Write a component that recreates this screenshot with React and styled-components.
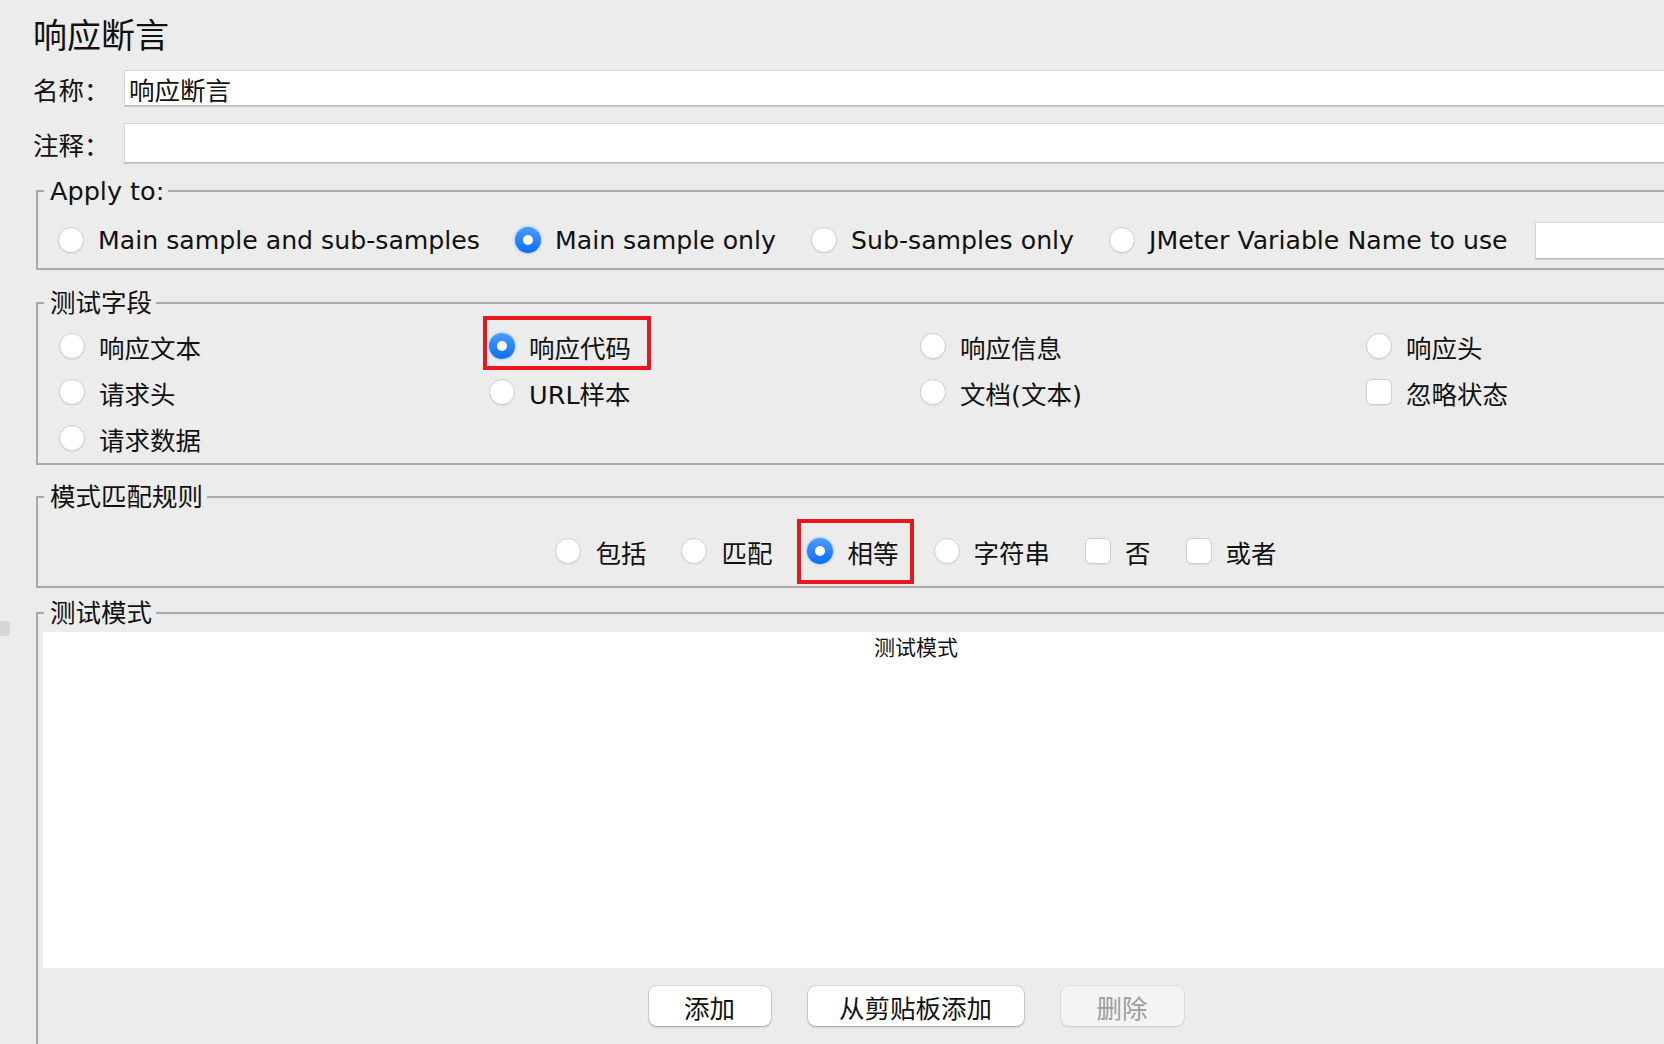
import React from 'react'
import styled, { createGlobalStyle, css } from 'styled-components'

const GlobalStyle = createGlobalStyle`
  html, body {
    margin: 0;
    padding: 0;
    background: #ececec;
    overflow: hidden;
  }
  body {
    font-family: "DejaVu Sans", "Noto Sans CJK SC", sans-serif;
    color: #111;
  }
`

const Page = styled.div`
  position: relative;
  width: 1800px;
  height: 1044px;
  padding: 14px 0 0 33px;
  box-sizing: border-box;
`

const Knob = styled.div`
  position: absolute;
  left: 0;
  top: 621px;
  width: 10px;
  height: 15px;
  border-radius: 0 4px 4px 0;
  background: #d6d6d6;
`

const Title = styled.h1`
  margin: 0;
  font-family: "Noto Sans CJK SC", sans-serif;
  font-size: 34px;
  font-weight: 400;
  line-height: 40px;
`

const FieldRow = styled.div`
  display: flex;
  align-items: center;
  margin-top: ${p => p.$mt}px;
  height: ${p => p.$h}px;
`

const Label = styled.span`
  width: 91px;
  flex: none;
  font-size: 25.5px;
`

const TextBox = styled.input`
  flex: 1;
  align-self: ${p => (p.$h ? 'center' : 'stretch')};
  height: ${p => (p.$h ? `${p.$h}px` : 'auto')};
  box-sizing: border-box;
  min-width: 0;
  margin: ${p => p.$margin || 0};
  padding: 0 4px;
  border: 1px solid #d6d6d6;
  border-bottom-color: #b9b9b9;
  box-shadow: 0 1px 1px rgba(0, 0, 0, 0.12);
  background: #fff;
  font: inherit;
  font-size: 25.5px;
  color: #111;
  outline: none;
`

const Group = styled.fieldset`
  margin: ${p => p.$mt}px 0 0 3px;
  width: 1760px;
  box-sizing: border-box;
  padding: 0 0 ${p => p.$pb || 0}px;
  min-width: 0;
  border: 2px solid #a9a9a9;
  font-size: 25.5px;
`

const Legend = styled.legend`
  margin-left: 6px;
  padding: 0 4px 0 6px;
  font-size: 25.5px;
  line-height: 28px;
`

const Line = styled.div`
  display: flex;
  align-items: center;
  justify-content: ${p => (p.$center ? 'center' : 'flex-start')};
  gap: 35px;
  height: 30px;
  padding: ${p => p.$pad};
  font-size: ${p => p.$fs || 25.5}px;
`

const Grid = styled.div`
  display: grid;
  grid-template-columns: 430px 431px 446px 1fr;
  grid-auto-rows: 30px;
  row-gap: 16px;
  padding: 14px 0 10px 21px;
`

const Option = styled.label`
  position: relative;
  display: inline-flex;
  align-items: center;
  gap: 14px;
  height: 30px;
  font-size: inherit;
  white-space: nowrap;
`

const Mark = styled.span`
  position: absolute;
  left: ${p => p.$l}px;
  top: ${p => p.$t}px;
  width: ${p => p.$w}px;
  height: ${p => p.$h}px;
  box-sizing: border-box;
  border: 4px solid #e8171c;
  pointer-events: none;
`

const Dot = styled.span`
  position: relative;
  flex: none;
  width: 26px;
  height: 26px;
  box-sizing: border-box;
  border-radius: ${p => (p.$square ? '6px' : '50%')};
  background: #fff;
  border: 1px solid #cfcfcf;
  box-shadow: 0 1px 1px rgba(0, 0, 0, 0.07);
  ${p =>
    p.$on &&
    css`
      border: none;
      background: linear-gradient(#4b9dfb, #0a6ef1);
      box-shadow: 0 0 3px rgba(20, 120, 245, 0.55);
      &::after {
        content: '';
        position: absolute;
        left: 50%;
        top: 50%;
        width: 10px;
        height: 10px;
        margin: -5px 0 0 -5px;
        border-radius: 50%;
        background: #fff;
      }
    `}
`

const Table = styled.div`
  height: 336px;
  margin: 5px 5px 0 5px;
  background: #fff;
`

const TableHead = styled.div`
  text-align: center;
  font-family: "Noto Sans CJK SC", sans-serif;
  font-size: 21px;
  line-height: 28px;
`

const Buttons = styled.div`
  display: flex;
  justify-content: center;
  gap: 37px;
  margin-top: 18px;
`

const Button = styled.button`
  width: ${p => p.$w}px;
  height: 40px;
  padding: 0;
  border: none;
  border-radius: 8px;
  background: ${p => (p.disabled ? '#f4f4f4' : '#fff')};
  color: ${p => (p.disabled ? '#9d9d9d' : '#111')};
  box-shadow: 0 0 0 1px rgba(0, 0, 0, ${p => (p.disabled ? 0.05 : 0.09)}),
    0 1px 2px rgba(0, 0, 0, ${p => (p.disabled ? 0.12 : 0.28)});
  font-family: "Noto Sans CJK SC", sans-serif;
  font-size: 25.5px;
`

const Choice = ({ children, on, square, mark }) => (
  <Option>
    {mark && <Mark {...mark} />}
    <Dot $on={on} $square={square} />
    {children}
  </Option>
)

export default function App() {
  return (
    <Page>
      <GlobalStyle />
      <Knob />
      <Title>响应断言</Title>
      <FieldRow $mt={16} $h={36}>
        <Label>名称：</Label>
        <TextBox readOnly value="响应断言" />
      </FieldRow>
      <FieldRow $mt={17} $h={40}>
        <Label>注释：</Label>
        <TextBox readOnly value="" />
      </FieldRow>

      <Group $mt={14}>
        <Legend>Apply to:</Legend>
        <Line $pad="20px 0 13px 20px" $fs={25.2}>
          <Choice>Main sample and sub-samples</Choice>
          <Choice on>Main sample only</Choice>
          <Choice>Sub-samples only</Choice>
          <Choice>JMeter Variable Name to use</Choice>
          <TextBox readOnly value="" $h={37} $margin="0 0 0 -8px" />
        </Line>
      </Group>

      <Group $mt={19}>
        <Legend>测试字段</Legend>
        <Grid>
          <Choice>响应文本</Choice>
          <Choice on mark={{ $l: -6, $t: -15, $w: 168, $h: 54 }}>响应代码</Choice>
          <Choice>响应信息</Choice>
          <Choice>响应头</Choice>
          <Choice>请求头</Choice>
          <Choice>URL样本</Choice>
          <Choice>文档(文本)</Choice>
          <Choice square>忽略状态</Choice>
          <Choice>请求数据</Choice>
        </Grid>
      </Group>

      <Group $mt={18}>
        <Legend>模式匹配规则</Legend>
        <Line $center $pad="25px 0 20px 0">
          <Choice>包括</Choice>
          <Choice>匹配</Choice>
          <Choice on mark={{ $l: -10, $t: -17, $w: 117, $h: 65 }}>相等</Choice>
          <Choice>字符串</Choice>
          <Choice square>否</Choice>
          <Choice square>或者</Choice>
        </Line>
      </Group>

      <Group $mt={11} $pb={60}>
        <Legend>测试模式</Legend>
        <Table>
          <TableHead>测试模式</TableHead>
        </Table>
        <Buttons>
          <Button $w={122}>添加</Button>
          <Button $w={216}>从剪贴板添加</Button>
          <Button $w={123} disabled>删除</Button>
        </Buttons>
      </Group>
    </Page>
  )
}
